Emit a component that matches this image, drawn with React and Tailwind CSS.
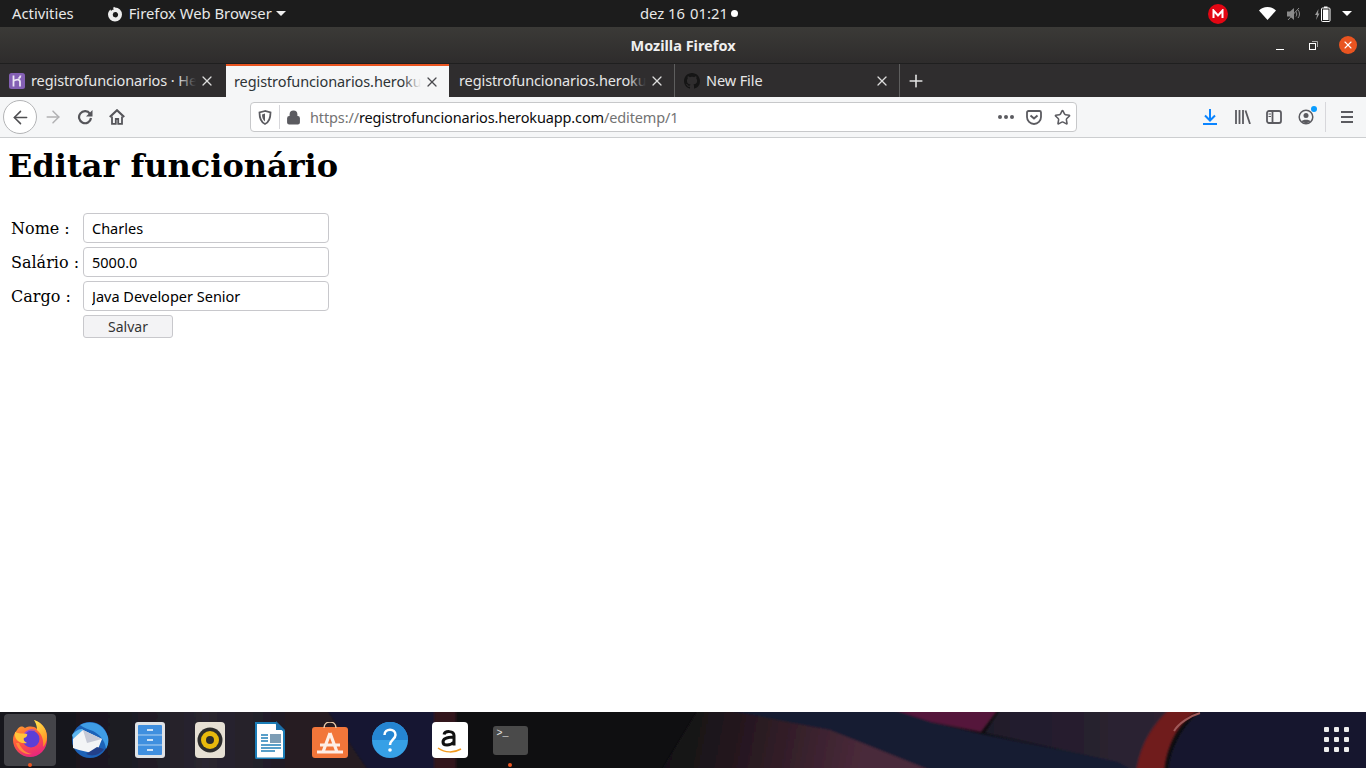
import React from "react";
import { X, Plus, ArrowLeft, ArrowRight, Lock, Star } from "lucide-react";

const ui = "font-['Noto_Sans','Open_Sans',sans-serif]";

function Tab({ icon, title, active, sep, fade, w = "w-[224px]" }) {
  return (
    <div className={`relative flex h-[33px] ${w} shrink-0 items-center ${active ? "bg-[#f5f6f7] border-t-[2px] border-[#e95420] text-[#2e3436]" : "text-[#e6e6e6]"} ${sep ? "border-r border-[#5e5e5e]" : ""}`}>
      <div className={`flex min-w-0 flex-1 items-center ${active ? "pl-[8px]" : "pl-[9px]"}`}>
        {icon && <span className="mr-[6px] shrink-0">{icon}</span>}
        <span className="relative min-w-0 flex-1 overflow-hidden whitespace-nowrap text-[14.5px] tracking-[-0.1px]">
          {title}
          {fade && <span className={`absolute right-0 top-0 h-full w-[18px] bg-gradient-to-r from-transparent ${active ? "to-[#f5f6f7]" : "to-[#2f2d2e]"}`} />}
        </span>
      </div>
      <span className="flex w-[28px] shrink-0 justify-center pr-[6px]">
        <X size={16} strokeWidth={1.9} className={active ? "text-[#4a4a4f]" : "text-[#dcdcdc]"} />
      </span>
    </div>
  );
}

const HerokuIcon = (
  <svg width="16" height="16" viewBox="0 0 16 16" className="block">
    <rect width="16" height="16" rx="2.5" fill="#8460b4" />
    <path d="M4.500 2.500v11M4.500 8c3-2 6.500-2 6.500 1v4.500M11.500 2.500c0 1.200-.6 2.300-2 3" stroke="#ece6f4" strokeWidth="1.800" fill="none" />
  </svg>
);
const GithubIcon = (
  <svg width="16" height="16" viewBox="0 0 16 16" className="block">
    <path fill="#151515" d="M8 0C3.58 0 0 3.58 0 8c0 3.54 2.29 6.53 5.47 7.59.4.07.55-.17.55-.38 0-.19-.01-.82-.01-1.49-2.01.37-2.53-.49-2.69-.94-.09-.23-.48-.94-.82-1.13-.28-.15-.68-.52-.01-.53.63-.01 1.08.58 1.23.82.72 1.21 1.87.87 2.33.66.07-.52.28-.87.51-1.07-1.78-.2-3.64-.89-3.64-3.95 0-.87.31-1.59.82-2.15-.08-.2-.36-1.02.08-2.12 0 0 .67-.21 2.2.82.64-.18 1.32-.27 2-.27s1.36.09 2 .27c1.53-1.04 2.2-.82 2.2-.82.44 1.1.16 1.92.08 2.12.51.56.82 1.27.82 2.15 0 3.07-1.87 3.75-3.65 3.95.29.25.54.73.54 1.48 0 1.07-.01 1.93-.01 2.2 0 .21.15.46.55.38A8.01 8.01 0 0 0 16 8c0-4.42-3.58-8-8-8z" />
  </svg>
);

function TopBar() {
  return (
    <div className={`relative flex h-[27px] shrink-0 items-center bg-[#1c1c1c] text-[14.8px] text-[#e8e8e8] ${ui}`}>
      <span className="ml-[12px]">Activities</span>
      <span className="ml-[33px] flex items-center">
        <svg width="16" height="16" viewBox="0 0 16 16" className="mr-[6px]">
          <path fill="#eee" fillRule="evenodd" d="M8 1.500A7 7 0 1 1 1 8.500C1 6.500 2 4.500 3.500 3.500L4 5c1-1.500 2.500-1.500 3-1.500C6 2.800 6 2 7 .8zM8.500 6A2.700 2.700 0 1 0 11 9.500 2.700 2.700 0 0 0 8.500 6z" />
        </svg>
        Firefox Web Browser
        <span className="ml-[4px] h-0 w-0 border-x-[5px] border-t-[5px] border-x-transparent border-t-[#eee]" />
      </span>
      <span className="absolute left-[640px] top-0 flex h-full items-center">
        <span>dez 16</span>
        <span className="ml-[5px]">01:21</span>
        <span className="ml-[3px] h-[7px] w-[7px] rounded-full bg-white" />
      </span>
      <div className="ml-auto flex items-center">
        <span className="mr-[31px] flex h-[20px] w-[20px] items-center justify-center rounded-full bg-[#e30613]">
          <svg width="12" height="10" viewBox="0 0 12 10"><path d="M1.500 9V1.500L6 6.500l4.500-5V9" stroke="#fff" strokeWidth="2" fill="none" /></svg>
        </span>
        <svg width="17" height="13" viewBox="0 0 17 13" className="mr-[11px]"><path fill="#fff" d="M8.500 13 0 3.500C2 1.500 5 0 8.500 0S15 1.500 17 3.500z" /></svg>
        <svg width="15" height="14" viewBox="0 0 15 14" className="mr-[13px]">
          <path fill="#8b8b8b" d="M0 4.500h3L7 1v12L3 9.500H0z" />
          <path d="M9 4.500c1 1.500 1 3.500 0 5M11 3c2 2 2 6 0 8M1 13 12 1" stroke="#8b8b8b" strokeWidth="1" fill="none" />
        </svg>
        <svg width="16" height="16" viewBox="0 0 16 16" className="mr-[11px]">
          <path fill="#9a9a9a" d="M3.500 3 0 9h2l-1 5 3.500-6.500H3z" />
          <rect x="6.500" y="2" width="8.500" height="13.500" rx="1" fill="none" stroke="#fff" />
          <rect x="8" y="3.500" width="5.500" height="10.500" fill="#fff" />
          <rect x="9" y="0.500" width="3.500" height="1.500" fill="#fff" />
        </svg>
        <span className="mr-[14px] h-0 w-0 border-x-[5px] border-t-[5px] border-x-transparent border-t-white" />
      </div>
    </div>
  );
}

function TitleBar() {
  return (
    <div className={`relative flex h-[37px] shrink-0 items-center justify-center bg-gradient-to-b from-[#3b3a37] to-[#2e2c2c] border-b border-[#1f1f1f] ${ui}`}>
      <span className="mt-[2px] text-[14.5px] font-bold text-[#efefef]">Mozilla Firefox</span>
      <div className="absolute right-[9px] top-0 flex h-full items-center">
        <span className="mr-[25px] mt-[8px] block h-[1px] w-[8px] bg-white" />
        <svg width="9" height="9" viewBox="0 0 9 9" className="mr-[21px]">
          <rect x="0.500" y="2.500" width="6" height="6" fill="none" stroke="#fff" />
          <path d="M3 .5h5.500V6" fill="none" stroke="#aaa" />
        </svg>
        <span className="flex h-[18px] w-[18px] items-center justify-center rounded-full bg-[#e95420]">
          <X size={12} strokeWidth={2.2} className="text-white" />
        </span>
      </div>
    </div>
  );
}

function TabBar() {
  return (
    <div className={`flex h-[33px] shrink-0 items-stretch bg-[#2f2d2e] ${ui}`}>
      <Tab w="w-[224px]" icon={HerokuIcon} title="registrofuncionarios · Heroku" fade />
      <div className="w-[2px]" />
      <Tab w="w-[223px]" active title="registrofuncionarios.herokuapp.com" fade />
      <div className="w-[1px]" />
      <Tab w="w-[225px]" sep title="registrofuncionarios.herokuapp.com" fade />
      <Tab w="w-[225px]" sep icon={GithubIcon} title="New File" />
      <span className="flex w-[31px] items-center justify-center">
        <Plus size={20} strokeWidth={1.9} className="text-[#e2e2e2]" />
      </span>
    </div>
  );
}

function NavBar() {
  return (
    <div className={`flex h-[41px] shrink-0 items-center border-b border-[#ccced0] bg-[#f5f6f7] ${ui}`}>
      <span className="ml-[3px] flex h-[34px] w-[34px] items-center justify-center rounded-full border border-[#b3b4b6] bg-white">
        <ArrowLeft size={21} strokeWidth={1.8} className="text-[#4f4f52]" />
      </span>
      <ArrowRight size={20} strokeWidth={1.8} className="ml-[6px] text-[#b1b1b3]" />
      <svg width="16" height="16" viewBox="0 0 16 16" className="ml-[14px] shrink-0">
        <path d="M13 4.800A6 6 0 1 0 14 9" fill="none" stroke="#55555a" strokeWidth="2.200" />
        <path d="M15.500 1v6.500H9z" fill="#55555a" />
      </svg>
      <svg width="16" height="16" viewBox="0 0 16 16" className="ml-[16px] shrink-0">
        <path d="M.8 8 8 1.300 15.200 8" fill="none" stroke="#55555a" strokeWidth="2.200" />
        <path d="M3 7.500V14.800h3.800V10h2.400v4.800H13V7.500" fill="none" stroke="#55555a" strokeWidth="1.800" />
      </svg>
      <div className="ml-[125px] flex h-[30px] w-[827px] shrink-0 items-center rounded-[4px] border border-[#c7c8ca] bg-white">
        <svg width="14" height="15" viewBox="0 0 14 15" className="ml-[7px] shrink-0">
          <path d="M7 1 1.500 2.500C1.500 8 2.500 12 7 14c4.500-2 5.500-6 5.500-11.500z" fill="none" stroke="#5b5b60" strokeWidth="1.800" />
          <path d="M7 3.500 4 4.500C4 8 5 10 7 11.500z" fill="#5b5b60" />
        </svg>
        <span className="ml-[7px] h-[24px] w-[1px] bg-[#d7d7db]" />
        <Lock size={15} strokeWidth={2.5} fill="#5b5b60" className="ml-[6px] text-[#5b5b60]" />
        <span className="ml-[9px] whitespace-nowrap pt-[2px] text-[14.5px] tracking-[-0.13px]">
          <span className="text-[#737373]">https://</span>
          <span className="text-[#0c0c0d]">registrofuncionarios.herokuapp.com</span>
          <span className="text-[#737373]">/editemp/1</span>
        </span>
        <span className="ml-auto flex items-center">
          <span className="flex gap-[2px]">
            <i className="block h-[4px] w-[4px] rounded-full bg-[#5b5b60]" />
            <i className="block h-[4px] w-[4px] rounded-full bg-[#5b5b60]" />
            <i className="block h-[4px] w-[4px] rounded-full bg-[#5b5b60]" />
          </span>
          <svg width="16" height="15" viewBox="0 0 16 15" className="ml-[12px]">
            <path d="M2.500 1h11A1.500 1.500 0 0 1 15 2.500V7a7 7 0 0 1-14 0V2.500A1.500 1.500 0 0 1 2.500 1z" fill="none" stroke="#5b5b60" strokeWidth="1.800" />
            <path d="m4.500 5.500 3.500 3 3.500-3" fill="none" stroke="#5b5b60" strokeWidth="2" />
          </svg>
          <Star size={17} strokeWidth={2.2} className="ml-[12px] mr-[5px] text-[#5b5b60]" />
        </span>
      </div>
      <svg width="14" height="16" viewBox="0 0 14 16" className="ml-[126px] shrink-0">
        <path d="M7 0v11M2 6.500l5 5 5-5" fill="none" stroke="#0a84ff" strokeWidth="2" />
        <path d="M0 15h14" stroke="#0a84ff" strokeWidth="2" />
      </svg>
      <svg width="16" height="14" viewBox="0 0 16 14" className="ml-[18px] shrink-0">
        <path d="M1 0v14M4.500 0v14M8 0v14M10.500.5l4.500 13.500" stroke="#5b5b60" strokeWidth="1.800" fill="none" />
      </svg>
      <svg width="16" height="14" viewBox="0 0 16 14" className="ml-[15px] shrink-0">
        <rect x="1" y="1" width="14" height="12" rx="2" fill="none" stroke="#5b5b60" strokeWidth="1.800" />
        <path d="M6.500 1v12" stroke="#5b5b60" strokeWidth="1.800" />
        <path d="M2.500 4h2.500M2.500 6.500h2.500" stroke="#5b5b60" />
      </svg>
      <span className="relative ml-[16px] shrink-0">
        <svg width="16" height="16" viewBox="0 0 16 16" className="block">
          <circle cx="8" cy="8" r="6.800" fill="none" stroke="#5b5b60" strokeWidth="1.500" />
          <circle cx="8" cy="6.500" r="2.500" fill="#5b5b60" />
          <path d="M3.500 12.500C4 10 12 10 12.500 12.500L8 14.500z" fill="#5b5b60" />
        </svg>
        <span className="absolute -right-[3px] -top-[3px] h-[6px] w-[6px] rounded-full bg-[#0a9dff]" />
      </span>
      <span className="ml-[11px] h-[30px] w-[1px] bg-[#d7d7db]" />
      <svg width="14" height="12" viewBox="0 0 14 12" className="ml-[14px] shrink-0">
        <path d="M1 1h12M1 6h12M1 11h12" stroke="#5b5b60" strokeWidth="2" />
      </svg>
    </div>
  );
}

function Field({ label, value }) {
  return (
    <div className="flex h-[34px] items-center">
      <label className="w-[75px] pl-[3px] pt-[2px] text-[16px] font-['DejaVu_Serif',serif] text-black">{label}</label>
      <input
        readOnly
        value={value}
        className={`h-[30px] w-[246px] rounded-[4px] border border-[#c8c8cc] bg-white px-[8px] text-[14.5px] text-black outline-none ${ui}`}
      />
    </div>
  );
}

function Page() {
  return (
    <main className="min-h-0 flex-1 overflow-hidden bg-white pl-[8px]">
      <h1 className="mt-[10px] h-[37px] text-[32px] font-bold leading-[37px] text-black font-['DejaVu_Serif',serif]">Editar funcionário</h1>
      <div className="mt-[26px]">
        <Field label="Nome :" value="Charles" />
        <Field label="Salário :" value="5000.0" />
        <Field label="Cargo :" value="Java Developer Senior" />
        <div className="flex pl-[75px] pt-[2px]">
          <button className={`h-[23px] w-[90px] rounded-[3px] border border-[#c8c8cc] bg-[#f3f3f5] text-[14px] leading-none text-[#333] ${ui}`}>Salvar</button>
        </div>
      </div>
    </main>
  );
}

const Slot = ({ children, active, dot }) => (
  <div className={`relative flex h-[52px] w-[52px] shrink-0 items-center justify-center rounded-[4px] ${active ? "bg-white/20" : ""}`}>
    {children}
    {dot && <span className="absolute bottom-[-1px] left-1/2 h-[4px] w-[4px] -translate-x-1/2 rounded-full bg-[#e95420]" />}
  </div>
);

function Wallpaper() {
  return (
    <svg width="1366" height="56" viewBox="0 0 1366 56" className="absolute inset-0">
      <defs>
        <linearGradient id="wl" x1="0" x2="1">
          <stop offset="0" stopColor="#15141a" />
          <stop offset="0.4" stopColor="#1c1a22" />
          <stop offset="0.7" stopColor="#2a2630" />
          <stop offset="1" stopColor="#201c26" />
        </linearGradient>
        <linearGradient id="wb" gradientUnits="userSpaceOnUse" x1="670" y1="20" x2="860" y2="56">
          <stop offset="0" stopColor="#111114" />
          <stop offset="0.45" stopColor="#2a1a22" />
          <stop offset="1" stopColor="#4a2a3a" />
        </linearGradient>
        <linearGradient id="wp" x1="0" x2="1">
          <stop offset="0" stopColor="#1f1c2c" />
          <stop offset="0.7" stopColor="#2a2130" />
          <stop offset="1" stopColor="#2e2530" />
        </linearGradient>
        <filter id="sb"><feGaussianBlur stdDeviation="0.8" /></filter>
      </defs>
      <rect width="1366" height="56" fill="#0f0f11" />
      <g filter="url(#sb)">
        <rect x="-5" y="-5" width="300" height="66" fill="url(#wl)" />
        <path d="M285-5h40l45 66h-85z" fill="#261a20" />
        <path d="M325-5h115v66h-70z" fill="#131730" />
        <path d="M434-5h22v66h-22z" fill="#33161c" />
        <path d="M660 61 700-5h12l120 23 108 30v13z" fill="url(#wb)" />
        <path d="M712-5h180l40 15 50 12 160 32-6 12H950L830 18z" fill="#141a32" />
        <path d="M885-5h115l-19 25-50-10z" fill="#55193a" />
        <path d="M1002-5h170l-34 66-20-11-133-29z" fill="url(#wp)" />
        <path d="M1172-5h34c-20 8-38 28-42 66h-28c4-30 18-50 36-66z" fill="#701a1f" />
        <path d="M1206-5h165v66h-203c2-30 20-54 38-66z" fill="#13132e" />
      </g>
      <path d="M1174 19c5-8 16-15 26-18" stroke="#a05a5a" strokeWidth="2" fill="none" />
    </svg>
  );
}

function Dock() {
  return (
    <div className={`relative h-[56px] shrink-0 overflow-hidden bg-[#0f0f12] ${ui}`}>
      <Wallpaper />
      <div className="relative flex h-full items-center gap-[8px] pl-[4px]">
        <Slot active dot>
          <svg width="36" height="38" viewBox="0 0 36 38" className="-mt-[5px]">
            <defs>
              <linearGradient id="ff" x1="0.2" y1="0" x2="0.6" y2="1"><stop offset="0" stopColor="#ffb02e" /><stop offset="0.5" stopColor="#ff5a3a" /><stop offset="1" stopColor="#e8257f" /></linearGradient>
              <linearGradient id="ft" x1="0.3" y1="0" x2="0.7" y2="1"><stop offset="0" stopColor="#ffe14a" /><stop offset="1" stopColor="#ff8a1f" /></linearGradient>
            </defs>
            <path d="M35 17C34 8 28 3 22 1c2 3 4 6 3 9-3-3-8-3-12-1C9 6 7 8 5 11 2 14 1 18 1 21a17 17 0 0 0 34 0z" fill="url(#ff)" />
            <path d="M22 1c7 2 13 8 13 17 0 4-2 8-4 10 1-6-1-13-6-17 0-4-1-7-3-10z" fill="url(#ft)" />
            <circle cx="19" cy="20" r="8.500" fill="#5b3fd6" />
            <path d="M11 19a8.500 8.500 0 0 1 14-6.500c-4-2-9-1-11 2-1 1-2 3-3 4.500z" fill="#9a4ad8" />
            <path d="M3 13c3 2 9 1 12 2 1 1-1 4-3 4-1 2 1 4 3 5-6 1-11-2-12-7z" fill="#ffc53a" />
            <path d="M4 24c2 8 9 12 16 11-6-1-11-5-13-11z" fill="#ff8a3a" />
          </svg>
        </Slot>
        <Slot>
          <svg width="38" height="38" viewBox="0 0 38 38">
            <circle cx="19" cy="19" r="18" fill="#1c62b8" />
            <path d="M9 4c9-5 23-3 28 12 1 4 0 9-2 12-1-9-6-14-13-18-5-2-9-3-13-6z" fill="#3f9ce6" />
            <path d="M1 14c4-5 7-6 11-6l-2 9-6 5z" fill="#5cb6f0" />
            <path d="M2 18 12 9l19 9-6 15L8 29 2 27z" fill="#f3f4f6" />
            <path d="M12 9 31 18l-15 4z" fill="#c6c9d6" />
            <path d="M15 33c6 3 14 1 18-5l-7-2z" fill="#23408a" />
          </svg>
        </Slot>
        <Slot>
          <svg width="30" height="36" viewBox="0 0 30 36">
            <rect width="30" height="36" rx="3" fill="#dfe3e6" />
            <rect x="3" y="3" width="24" height="30" rx="1" fill="#3f8fdf" />
            <path d="M3 13h24M3 23h24" stroke="#b4d4f2" />
            <path d="M12 8h6M12 18h6M12 28h6" stroke="#fff" strokeWidth="1.500" />
          </svg>
        </Slot>
        <Slot>
          <svg width="30" height="36" viewBox="0 0 30 36">
            <rect width="30" height="36" rx="4" fill="#e6e0d4" />
            <circle cx="15" cy="18" r="12.500" fill="#2c2c2c" />
            <circle cx="15" cy="18" r="9" fill="#e8b90c" />
            <circle cx="15" cy="18" r="4" fill="#2c2c2c" />
          </svg>
        </Slot>
        <Slot>
          <svg width="30" height="38" viewBox="0 0 30 38">
            <path d="M1 2h20l8 8v26a1.500 1.500 0 0 1-1.500 1.500h-25A1.500 1.500 0 0 1 1 36z" fill="#fff" stroke="#1b7eb8" strokeWidth="2" />
            <path d="M21 0l9 9h-9z" fill="#1b6ea8" />
            <rect x="15" y="13" width="11" height="9" fill="#7d9db5" />
            <path d="M6 14h7M6 17h7M6 20h7M6 24h20M6 27h20M6 30h14" stroke="#2280b8" strokeWidth="1.500" />
          </svg>
        </Slot>
        <Slot>
          <svg width="36" height="36" viewBox="0 0 36 36">
            <rect y="5" width="36" height="31" rx="3" fill="#f2763a" />
            <path d="M12 6c0-8 12-8 12 0" fill="none" stroke="#e8c8a8" strokeWidth="1.500" />
            <path d="M18 11 11 30M18 11l7 19M8 23h20M5 30h26" stroke="#fdeee6" strokeWidth="3.200" fill="none" />
          </svg>
        </Slot>
        <Slot>
          <svg width="36" height="36" viewBox="0 0 36 36">
            <circle cx="18" cy="18" r="18" fill="#36a0e6" />
            <path d="M0 18a18 18 0 0 1 36 0z" fill="#2585d2" />
            <path d="M12.500 13c0-7 11-7 11 0 0 4-5.500 5-5.500 10" fill="none" stroke="#fff" strokeWidth="2.500" />
            <circle cx="18" cy="28" r="1.800" fill="#fff" />
          </svg>
        </Slot>
        <Slot>
          <svg width="36" height="36" viewBox="0 0 36 36">
            <rect width="36" height="36" rx="4" fill="#fff" />
            <path d="M12 12.500c1-4 10-4 10 1v10M22 15c-8 0-11 2-11 5 0 4 7 4 11 0" fill="none" stroke="#111" strokeWidth="3" />
            <path d="M6 26c7 5 16 5 23 1" fill="none" stroke="#f29a1f" strokeWidth="1.500" />
          </svg>
        </Slot>
        <Slot dot>
          <span className="flex h-[29px] w-[35px] rounded-[3px] bg-[#4a4a4a] pl-[4px] pt-[3px] font-['Liberation_Mono',monospace] text-[10px] leading-[10px] text-[#e8e8e8]">&gt;_</span>
        </Slot>
      </div>
      <div className="absolute right-[17px] top-[15px] grid grid-cols-3 gap-[5px]">
        {Array.from({ length: 9 }).map((_, i) => (
          <span key={i} className="h-[5px] w-[5px] rounded-[1px] bg-[#eee]" />
        ))}
      </div>
    </div>
  );
}

export default function App() {
  return (
    <div className="flex h-[768px] w-[1366px] flex-col overflow-hidden bg-white">
      <TopBar />
      <TitleBar />
      <TabBar />
      <NavBar />
      <Page />
      <Dock />
    </div>
  );
}
